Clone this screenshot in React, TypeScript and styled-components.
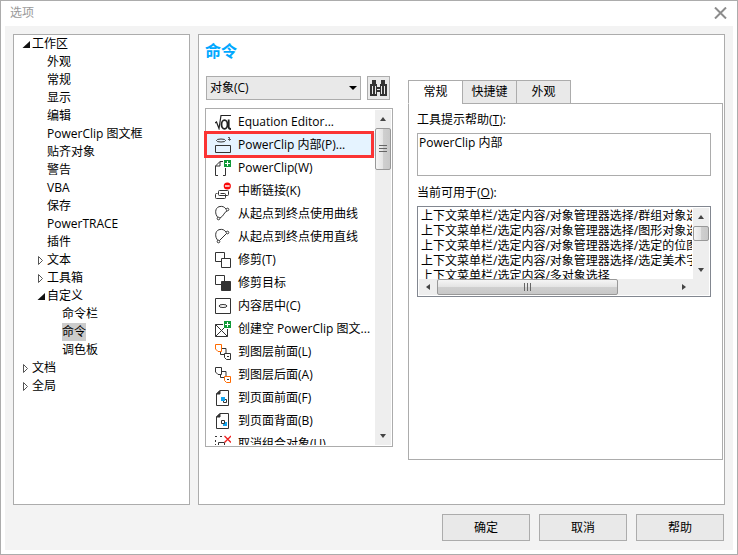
import React, { useState } from "react";
import styled, { createGlobalStyle, css } from "styled-components";

const line = "#acacac";
const ink = "#333333";
const face = "#e9e9e9";

const GlobalStyle = createGlobalStyle`
  *, *::before, *::after { box-sizing: border-box; }
  body { margin: 0; background: #ffffff; }
  body, button, select, textarea {
    font-family: "Open Sans", "Noto Sans CJK SC", sans-serif;
    font-size: 12px;
    line-height: 18px;
    color: #000000;
  }
`;

const Dialog = styled.main`
  display: flex;
  flex-direction: column;
  height: 100vh;
  border: 1px solid ${line};
  background: #ffffff;
  padding: 0 4px 4px;
`;

const TitleBar = styled.header`
  display: flex;
  align-items: center;
  justify-content: space-between;
  flex: none;
  height: 25px;
  padding: 0 5px 2px;
  color: #999999;
`;

const Title = styled.h1`
  margin: 0;
  font-size: 12px;
  font-weight: 400;
`;

const CloseButton = styled.button`
  display: flex;
  padding: 0 1px 0 0;
  border: 0;
  background: none;
`;

const Body = styled.div`
  flex: 1;
  min-height: 0;
  display: flex;
  flex-direction: column;
  padding: 8px 8px 9px;
  background: #f3f3f3;
`;

const Panels = styled.div`
  flex: 1;
  min-height: 0;
  display: grid;
  grid-template-columns: 177px minmax(0, 1fr);
  gap: 8px;
`;

const TreePanel = styled.nav`
  border: 1px solid ${line};
  background: #ffffff;
  overflow: hidden;
`;

const Tree = styled.ul`
  margin: 0;
  padding: 0;
  list-style: none;
`;

const TreeRow = styled.li<{ $level: number }>`
  display: flex;
  align-items: center;
  height: 18px;
  padding-left: ${(p) => 8 + p.$level * 15}px;
`;

const Marker = styled.span`
  display: flex;
  flex: none;
  width: 10px;
`;

const TreeButton = styled.button<{ $selected: boolean }>`
  height: 18px;
  padding: 0;
  border: 0;
  white-space: nowrap;
  background: ${(p) => (p.$selected ? "#cccccc" : "none")};
`;

const MainPanel = styled.section`
  display: flex;
  flex-direction: column;
  min-height: 0;
  border: 1px solid ${line};
  background: #ffffff;
  padding: 4px 1px 44px 6px;
`;

const Heading = styled.h2`
  flex: none;
  margin: 0 0 13px;
  font-size: 16px;
  line-height: 24px;
  font-weight: 700;
  color: #00a8ff;
`;

const Columns = styled.div`
  flex: 1;
  min-height: 0;
  display: grid;
  grid-template-columns: 188px minmax(0, 1fr);
  gap: 15px;
`;

const CommandColumn = styled.div`
  display: flex;
  flex-direction: column;
  min-height: 0;
  padding-bottom: 13px;
`;

const Toolbar = styled.div`
  display: flex;
  flex: none;
  gap: 6px;
  padding: 0 3px 0 1px;
  margin-bottom: 8px;
`;

const SelectBox = styled.div`
  position: relative;
  flex: 1;
  display: flex;

  svg {
    position: absolute;
    right: 4px;
    top: 10px;
    pointer-events: none;
  }
`;

const Select = styled.select`
  appearance: none;
  width: 100%;
  height: 24px;
  padding: 0 3px;
  border: 1px solid ${line};
  border-radius: 0;
  background: ${face};
`;

const FindButton = styled.button`
  display: flex;
  align-items: center;
  justify-content: center;
  width: 23px;
  height: 24px;
  padding: 0;
  border: 1px solid ${line};
  background: ${face};
`;

const CommandBox = styled.div`
  position: relative;
  flex: 1;
  min-height: 0;
  display: flex;
  border: 1px solid ${line};
  padding: 1px;
`;

const CommandList = styled.ul`
  flex: 1;
  min-width: 0;
  margin: 0;
  padding: 0;
  list-style: none;
  overflow: hidden;
`;

const CommandRow = styled.li<{ $selected: boolean }>`
  display: flex;
  align-items: center;
  gap: 7px;
  height: 23px;
  padding-left: 8px;
  white-space: nowrap;
  background: ${(p) => (p.$selected ? "#e5f3ff" : "none")};

  svg { flex: none; }
`;

const Highlight = styled.div`
  position: absolute;
  top: 22px;
  left: -2px;
  right: 18px;
  height: 27px;
  border: 3px solid #fb3434;
  pointer-events: none;
`;

const ScrollTrack = styled.div<{ $horizontal?: boolean }>`
  display: flex;
  flex: none;
  flex-direction: ${(p) => (p.$horizontal ? "row" : "column")};
  ${(p) => (p.$horizontal ? "height: 16px;" : "width: 16px;")}
  background: #eeeeee;
`;

const ScrollArrow = styled.button`
  display: flex;
  flex: none;
  align-items: center;
  justify-content: center;
  min-width: 16px;
  height: 18px;
  padding: 0;
  border: 0;
  background: none;
`;

const SideArrow = styled(ScrollArrow)`
  width: 18px;
  height: 16px;
`;

const ScrollThumb = styled.div<{ $length: number; $horizontal?: boolean }>`
  display: flex;
  align-items: center;
  justify-content: center;
  flex: none;
  border: 1px solid #989898;
  border-radius: 2px;
  ${(p) =>
    p.$horizontal
      ? css`
          width: ${p.$length}px;
          background: linear-gradient(#f5f5f5, #e4e4e4 48%, #cfcfcf 52%, #c8c8c8);
        `
      : css`
          height: ${p.$length}px;
          background: linear-gradient(90deg, #f5f5f5, #e4e4e4 48%, #cfcfcf 52%, #c8c8c8);
        `}
`;

const Spacer = styled.div`
  flex: 1;
`;

const DetailColumn = styled.div`
  display: flex;
  flex-direction: column;
  min-height: 0;
  padding: 4px 0 0;
`;

const TabList = styled.div`
  display: flex;
  flex: none;
  margin-bottom: -1px;
`;

const Tab = styled.button<{ $active: boolean }>`
  position: relative;
  width: 55px;
  height: 24px;
  margin-right: -1px;
  padding: 0;
  border: 1px solid ${line};
  border-bottom-color: ${(p) => (p.$active ? "#ffffff" : line)};
  background: ${(p) => (p.$active ? "#ffffff" : face)};
`;

const TabPanel = styled.div`
  flex: 1;
  min-height: 0;
  display: flex;
  flex-direction: column;
  border: 1px solid ${line};
  padding: 7px 11px 7px 8px;
`;

const FieldLabel = styled.label`
  flex: none;
  height: 18px;
  margin-bottom: 4px;
`;

const HelpText = styled.textarea`
  flex: none;
  height: 43px;
  margin: 0 0 8px;
  padding: 0 1px;
  border: 1px solid ${line};
  border-radius: 0;
  resize: none;
  overflow: hidden;
`;

const AvailableBox = styled.div`
  display: flex;
  flex-direction: column;
  height: 91px;
  border: 1px solid #828790;
  padding: 1px;
`;

const AvailableTop = styled.div`
  flex: 1;
  min-height: 0;
  display: flex;
  gap: 1px;
`;

const AvailableList = styled.ul`
  flex: 1;
  min-width: 0;
  margin: 0;
  padding: 0 0 0 2px;
  list-style: none;
  overflow: hidden;
`;

const AvailableRow = styled.li`
  height: 15px;
  line-height: 15px;
  white-space: nowrap;
`;

const BottomBar = styled.div`
  display: flex;
  padding-right: 16px;
  background: #eeeeee;
`;

const BottomTrack = styled(ScrollTrack)`
  flex: 1;
`;

const Footer = styled.footer`
  display: flex;
  flex: none;
  justify-content: flex-end;
  gap: 9px;
  padding: 9px 1px 0 0;
`;

const FooterButton = styled.button`
  width: 88px;
  height: 27px;
  padding: 0;
  border: 1px solid ${line};
  background: ${face};
`;

type Direction = "up" | "down" | "left" | "right";
const arrowPaths: Record<Direction, string> = {
  up: "M4 2 7 6H1z",
  down: "M1 2h6L4 6z",
  left: "M2 4 6 1v6z",
  right: "M6 4 2 1v6z",
};

function Arrow({ to }: { to: Direction }) {
  return (
    <svg width="8" height="8" viewBox="0 0 8 8" aria-hidden="true">
      <path d={arrowPaths[to]} fill="#444444" />
    </svg>
  );
}

function Grip({ horizontal }: { horizontal?: boolean }) {
  return (
    <svg width="8" height="8" viewBox="0 0 8 8" stroke="#666666" aria-hidden="true">
      <path d={horizontal ? "M.5 0v8M3.5 0v8M6.5 0v8" : "M0 .5h8M0 3.5h8M0 6.5h8"} />
    </svg>
  );
}

const plusBadge = (
  <g>
    <path d="M9 1h7v7H9z" fill="#109a38" stroke="none" />
    <path d="M12.5 2v5M10 4.5h5" stroke="#fff" />
  </g>
);

const curveNodes = (
  <g>
    <path d="M3 12.500C-.5 9 0 3 4 1.700C7.500 .7 9.500 2 11 4" />
    <circle cx="12.500" cy="4.500" r="1.300" />
    <circle cx="3.500" cy="13.500" r="1.300" />
  </g>
);

const layerBack = "M.5 1.500h6v7H3L.5 6z";
const layerMid = "M6.500 5.500H11v5M5.500 8v3.500h3.500";
const layerFront = "M9.500 10.500h6v6h-4l-2-2z";
const pageShape = "M5 1.500h8.500v15h-12V5z";

const icons: Record<string, React.ReactNode> = {
  equation: (
    <g stroke="#222222">
      <path d="M0 10 1.500 9 4 15.500 6 2.500H16" strokeWidth="1.200" />
      <ellipse cx="9.500" cy="11.500" rx="3" ry="4.300" strokeWidth="1.800" />
      <path d="M13.700 6.500V14q0 2 2.300 2" strokeWidth="1.800" />
    </g>
  ),
  inside: (
    <g>
      <ellipse cx="6" cy="4.500" rx="4.500" ry="1.500" />
      <path d="M.5 9.500h15v7H.5z" />
      <path d="M13 1.500h1.500V4M13 3 14.500 4.500 16 3" strokeWidth=".8" />
    </g>
  ),
  create: (
    <g>
      <path d="M8 2.500H5L.5 7v9.500H3M5 2.500V7H.5M10.500 9v7.500H8" />
      {plusBadge}
    </g>
  ),
  unlink: (
    <g>
      <rect x="3.500" y="8.500" width="10" height="5" rx="1" />
      <path d="M2.500 11.500h-1q-1 0-1 1v3q0 1 1 1h8q1 0 1-1v-3q0-1-1-1H5.500" />
      <circle cx="12.300" cy="4" r="3.600" fill="#f90909" stroke="none" />
      <path d="M10 4h4.600" stroke="#fff" strokeWidth="1.400" />
    </g>
  ),
  curve: <g>{curveNodes}<path d="M12 6C9 7 9 11 5 13" /></g>,
  straight: <g>{curveNodes}<path d="M11.500 5.500 4.500 12.500" /></g>,
  trim: (
    <g>
      <path d="M.5 1.500h9v9h-9z" />
      <path d="M6.500 7.500h9v9h-9z" fill="#fff" />
    </g>
  ),
  trimTarget: (
    <g>
      <path d="M.5 1.500h9v9h-9z" />
      <path d="M6.500 7.500h9v9h-9z" fill={ink} />
    </g>
  ),
  center: (
    <g>
      <path d="M.5 1.500h15v15H.5z" />
      <ellipse cx="8" cy="9" rx="4" ry="1.500" />
    </g>
  ),
  empty: (
    <g>
      <path d="M8 4.500H.5v12h12V9M.5 4.500 12.500 16.500M.5 16.500 9 8" />
      {plusBadge}
    </g>
  ),
  layerFront: (
    <g>
      <path d={layerMid} />
      <path d={layerBack} stroke="#ff6a00" />
      <path d={layerFront} />
      <path d="M12 13.500h2" />
    </g>
  ),
  layerBack: (
    <g>
      <path d={layerBack} />
      <path d={layerMid} />
      <path d={layerFront} stroke="#ff6a00" />
      <path d="M12 13.500h2" />
    </g>
  ),
  pageFront: (
    <g>
      <path d={pageShape} />
      <path d="M5 1.500V5H1.500z" fill={ink} />
      <path d="M8.500 10.500h3v3h-3z" />
      <path d="M6 8h4v4H6z" fill="#12a5f0" stroke="none" />
    </g>
  ),
  pageBack: (
    <g>
      <path d={pageShape} />
      <path d="M5 1.500V5H1.500z" fill={ink} />
      <path d="M8 10h4v4H8z" fill="#12a5f0" stroke="none" />
      <path d="M6.500 8.500h3v3h-3z" fill="#fff" />
    </g>
  ),
  ungroup: (
    <g>
      <path d="M0 1.500h2M5 1.500h2M.5 5v2M.5 9v2M3.500 11V7.500h6V11M12 10.500h3" />
      <path d="M9.500 1 16 7.500M16 1 9.500 7.500" stroke="#ee2222" strokeWidth="1.400" />
    </g>
  ),
};

function CommandIcon({ name }: { name: string }) {
  return (
    <svg width="16" height="17" viewBox="0 0 16 17" fill="none" stroke={ink} aria-hidden="true">
      {icons[name]}
    </svg>
  );
}

type Node = { label: string; level: number; state?: "open" | "closed" };
const treeNodes: Node[] = [
  { label: "工作区", level: 0, state: "open" },
  { label: "外观", level: 1 },
  { label: "常规", level: 1 },
  { label: "显示", level: 1 },
  { label: "编辑", level: 1 },
  { label: "PowerClip 图文框", level: 1 },
  { label: "贴齐对象", level: 1 },
  { label: "警告", level: 1 },
  { label: "VBA", level: 1 },
  { label: "保存", level: 1 },
  { label: "PowerTRACE", level: 1 },
  { label: "插件", level: 1 },
  { label: "文本", level: 1, state: "closed" },
  { label: "工具箱", level: 1, state: "closed" },
  { label: "自定义", level: 1, state: "open" },
  { label: "命令栏", level: 2 },
  { label: "命令", level: 2 },
  { label: "调色板", level: 2 },
  { label: "文档", level: 0, state: "closed" },
  { label: "全局", level: 0, state: "closed" },
];

const commands = [
  ["equation", "Equation Editor..."],
  ["inside", "PowerClip 内部(P)..."],
  ["create", "PowerClip(W)"],
  ["unlink", "中断链接(K)"],
  ["curve", "从起点到终点使用曲线"],
  ["straight", "从起点到终点使用直线"],
  ["trim", "修剪(T)"],
  ["trimTarget", "修剪目标"],
  ["center", "内容居中(C)"],
  ["empty", "创建空 PowerClip 图文..."],
  ["layerFront", "到图层前面(L)"],
  ["layerBack", "到图层后面(A)"],
  ["pageFront", "到页面前面(F)"],
  ["pageBack", "到页面背面(B)"],
  ["ungroup", "取消组合对象(U)"],
];

const available = [
  "上下文菜单栏/选定内容/对象管理器选择/群组对象选",
  "上下文菜单栏/选定内容/对象管理器选择/图形对象选",
  "上下文菜单栏/选定内容/对象管理器选择/选定的位图",
  "上下文菜单栏/选定内容/对象管理器选择/选定美术字",
  "上下文菜单栏/选定内容/多对象选择",
];

const tabs = ["常规", "快捷键", "外观"];

export default function App() {
  const [node, setNode] = useState("命令");
  const [command, setCommand] = useState("inside");
  const [tab, setTab] = useState("常规");

  return (
    <Dialog>
      <GlobalStyle />
      <TitleBar>
        <Title>选项</Title>
        <CloseButton aria-label="关闭">
          <svg width="13" height="12" viewBox="0 0 13 12" stroke="#8c8c8c" strokeWidth="2" aria-hidden="true">
            <path d="M1 .5 12 11.500M12 .5 1 11.500" />
          </svg>
        </CloseButton>
      </TitleBar>
      <Body>
        <Panels>
          <TreePanel>
            <Tree>
              {treeNodes.map((n) => (
                <TreeRow key={n.label} $level={n.level}>
                  <Marker>
                    {n.state && (
                      <svg width="8" height="9" viewBox="0 0 8 9" aria-hidden="true">
                        {n.state === "open" ? (
                          <path d="M8 1v7H.5z" fill="#111111" />
                        ) : (
                          <path d="M1.500.5v8L5.500 4.500z" fill="#fff" stroke="#555555" />
                        )}
                      </svg>
                    )}
                  </Marker>
                  <TreeButton $selected={n.label === node} onClick={() => setNode(n.label)}>
                    {n.label}
                  </TreeButton>
                </TreeRow>
              ))}
            </Tree>
          </TreePanel>
          <MainPanel>
            <Heading>命令</Heading>
            <Columns>
              <CommandColumn>
                <Toolbar>
                  <SelectBox>
                    <Select aria-label="命令类别" defaultValue="c">
                      <option value="c">对象(C)</option>
                    </Select>
                    <svg width="8" height="4" viewBox="0 0 8 4" aria-hidden="true">
                      <path d="M0 0h8L4 4z" />
                    </svg>
                  </SelectBox>
                  <FindButton aria-label="查找">
                    <svg width="17" height="17" viewBox="0 0 17 17" fill={ink} aria-hidden="true">
                      <path
                        fillRule="evenodd"
                        d="M2 0h4v4h1v3h3V4h1V0h4v4h2v12h-7v-4H7v4H0V4h2zM2 6v8h1V6zM5 6v8h1V6zM11 6v8h1V6zM14 6v8h1V6zM7 9v1h3V9z"
                      />
                    </svg>
                  </FindButton>
                </Toolbar>
                <CommandBox>
                  <CommandList role="listbox" aria-label="命令">
                    {commands.map(([icon, label]) => (
                      <CommandRow
                        key={icon}
                        role="option"
                        aria-selected={icon === command}
                        $selected={icon === command}
                        onClick={() => setCommand(icon)}
                      >
                        <CommandIcon name={icon} />
                        {label}
                      </CommandRow>
                    ))}
                  </CommandList>
                  <ScrollTrack>
                    <ScrollArrow aria-label="向上"><Arrow to="up" /></ScrollArrow>
                    <ScrollThumb $length={42}><Grip /></ScrollThumb>
                    <Spacer />
                    <ScrollArrow aria-label="向下"><Arrow to="down" /></ScrollArrow>
                  </ScrollTrack>
                  <Highlight />
                </CommandBox>
              </CommandColumn>
              <DetailColumn>
                <TabList role="tablist">
                  {tabs.map((t) => (
                    <Tab key={t} role="tab" aria-selected={t === tab} $active={t === tab} onClick={() => setTab(t)}>
                      {t}
                    </Tab>
                  ))}
                </TabList>
                <TabPanel role="tabpanel">
                  <FieldLabel htmlFor="help">工具提示帮助(<u>T</u>):</FieldLabel>
                  <HelpText id="help" defaultValue="PowerClip 内部" />
                  <FieldLabel as="span" id="available-label">当前可用于(<u>O</u>):</FieldLabel>
                  <AvailableBox>
                    <AvailableTop>
                      <AvailableList aria-labelledby="available-label">
                        {available.map((a) => (
                          <AvailableRow key={a}>{a}</AvailableRow>
                        ))}
                      </AvailableList>
                      <ScrollTrack>
                        <ScrollArrow aria-label="向上"><Arrow to="up" /></ScrollArrow>
                        <ScrollThumb $length={15} />
                        <Spacer />
                        <ScrollArrow aria-label="向下"><Arrow to="down" /></ScrollArrow>
                      </ScrollTrack>
                    </AvailableTop>
                    <BottomBar>
                      <BottomTrack $horizontal>
                        <SideArrow aria-label="向左"><Arrow to="left" /></SideArrow>
                        <ScrollThumb $length={181} $horizontal><Grip horizontal /></ScrollThumb>
                        <Spacer />
                        <SideArrow aria-label="向右"><Arrow to="right" /></SideArrow>
                      </BottomTrack>
                    </BottomBar>
                  </AvailableBox>
                </TabPanel>
              </DetailColumn>
            </Columns>
          </MainPanel>
        </Panels>
        <Footer>
          <FooterButton>确定</FooterButton>
          <FooterButton>取消</FooterButton>
          <FooterButton>帮助</FooterButton>
        </Footer>
      </Body>
    </Dialog>
  );
}
